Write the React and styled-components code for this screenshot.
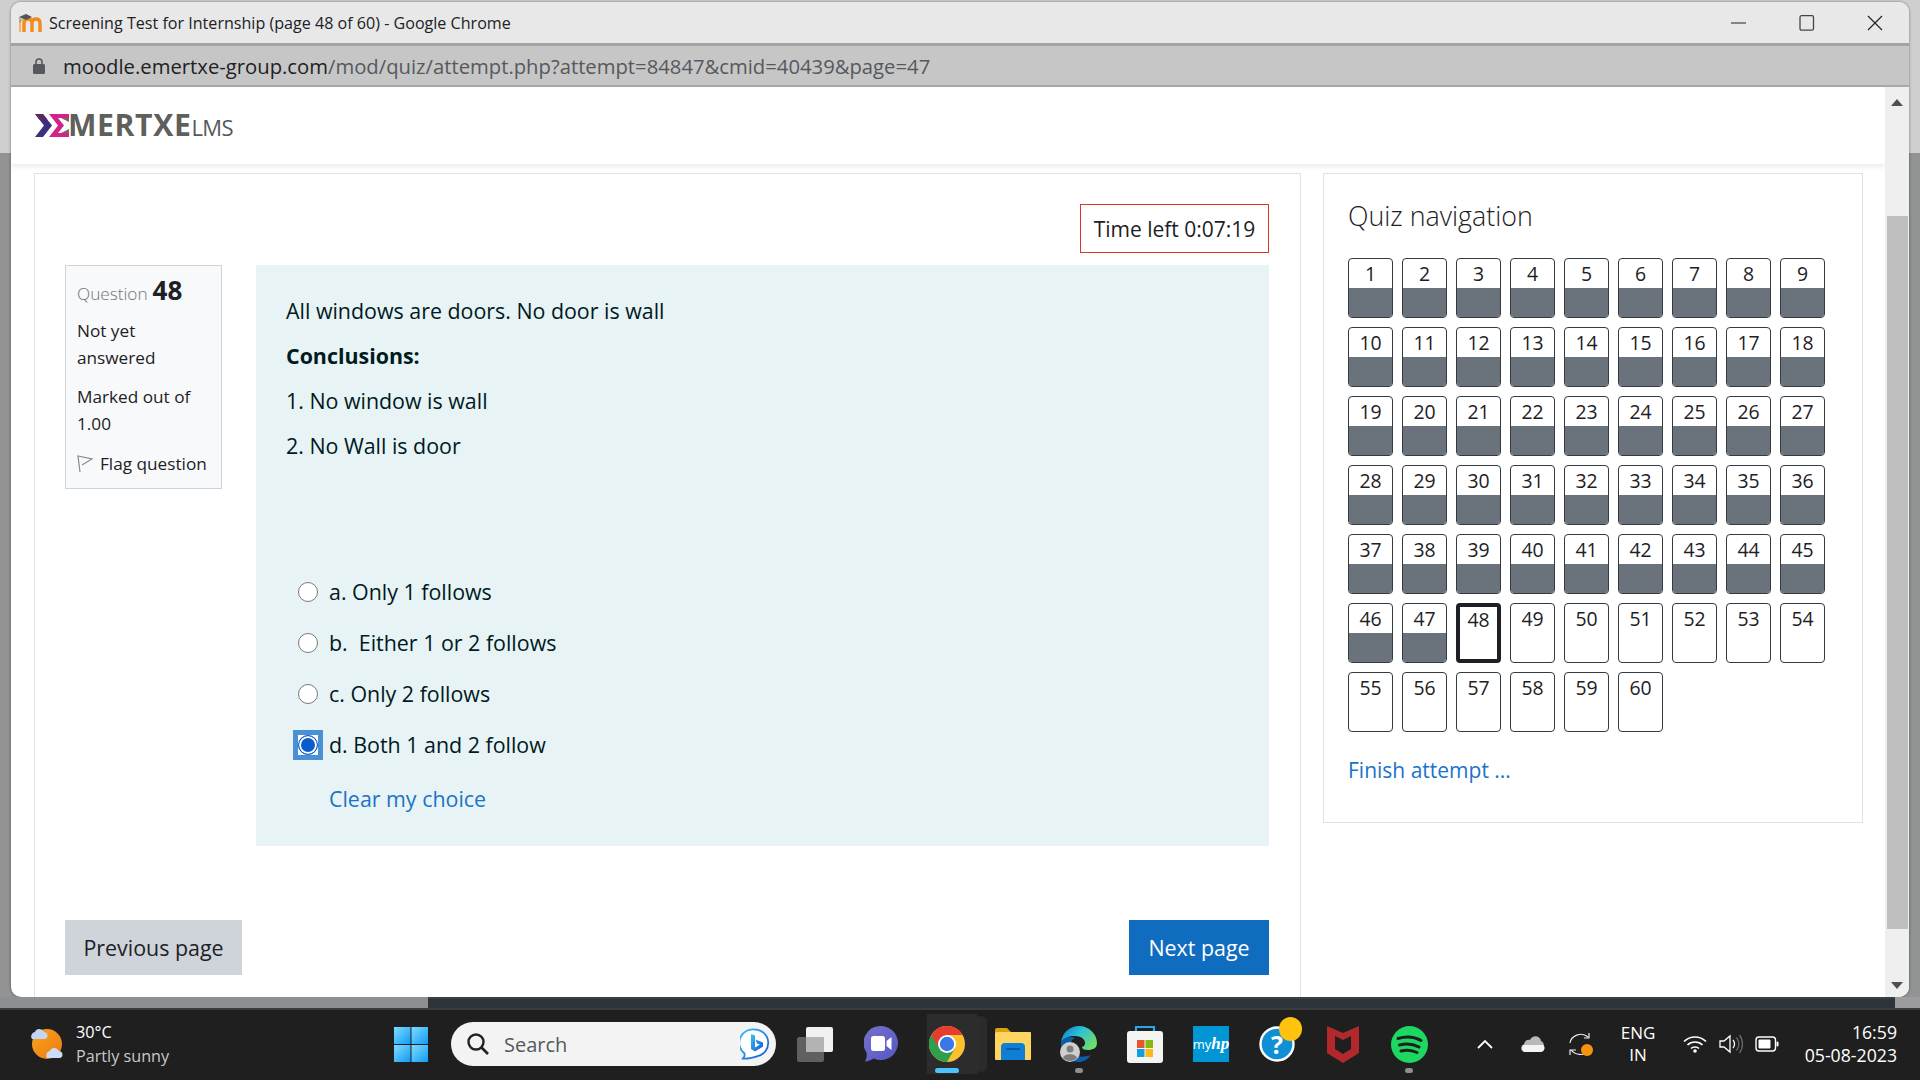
import React from 'react';
import styled, { createGlobalStyle } from 'styled-components';

const Global = createGlobalStyle`
  html, body { margin: 0; padding: 0; background: #1f1f1f; }
  body { font-family: "Open Sans", "Noto Sans", sans-serif; color: #1d2125; }
  * { box-sizing: border-box; }
`;

const Screen = styled.div`
  width: 1920px;
  height: 1080px;
  display: flex;
  flex-direction: column;
  overflow: hidden;
  background: #1f1f1f;
`;

const Desktop = styled.div`
  height: 997px;
  padding: 2px 11px 0 11px;
  flex: none;
  background: linear-gradient(#cfcfcf 0 153px, #929394 153px);
`;

const Win = styled.div`
  height: 995px;
  border-radius: 10px;
  overflow: hidden;
  display: flex;
  flex-direction: column;
  background: #fff;
  box-shadow: 0 0 3px rgba(0, 0, 0, 0.45);
`;

const TitleBar = styled.div`
  height: 44px;
  flex: none;
  display: flex;
  align-items: center;
  padding: 0 0 0 7px;
  background: #e8e8e8;
  border-bottom: 3px solid #a3a3a3;
`;

const TitleText = styled.span`
  margin-left: 7px;
  font-size: 16.1px;
  color: #202124;
  white-space: nowrap;
`;

const WinControls = styled.div`
  margin-left: auto;
  display: flex;
  height: 100%;
`;

const WinControl = styled.div`
  width: 68px;
  display: flex;
  align-items: center;
  justify-content: center;
`;

const AddressBar = styled.div`
  height: 41px;
  flex: none;
  display: flex;
  align-items: center;
  padding: 1px 0 0 21px;
  background: #c6c6c6;
  border-bottom: 2px solid #a9a9a9;
  font-size: 20.25px;
  white-space: nowrap;
`;

const Host = styled.span`
  margin-left: 17px;
  color: #202124;
`;

const UrlPath = styled.span`
  color: #55595e;
`;

const Page = styled.div`
  flex: 1;
  min-height: 0;
  display: flex;
`;

const PageBody = styled.div`
  flex: 1;
  min-width: 0;
  display: flex;
  flex-direction: column;
`;

const Header = styled.div`
  height: 77px;
  flex: none;
  display: flex;
  align-items: center;
  padding: 0 0 0 24px;
  box-shadow: 0 2px 6px rgba(0, 0, 0, 0.1);
`;

const LogoName = styled.span`
  margin-left: -1px;
  font-size: 30.2px;
  font-weight: 700;
  letter-spacing: 0.6px;
  color: #5f5f5c;
  line-height: 1;
`;

const LogoLms = styled.span`
  font-size: 22px;
  letter-spacing: -0.6px;
  color: #55595c;
  line-height: 1;
  margin-top: 3px;
`;

const Columns = styled.div`
  flex: 1;
  min-height: 0;
  display: flex;
  align-items: flex-start;
  padding: 9px 0 0 23px;
  gap: 22px;
`;

const MainCard = styled.div`
  width: 1267px;
  height: 830px;
  padding: 30px 31px 0 30px;
  border: 1px solid #dee2e6;
  border-bottom: 0;
  display: flex;
  flex-direction: column;
`;

const Timer = styled.div`
  align-self: flex-end;
  width: 189px;
  height: 49px;
  display: flex;
  align-items: center;
  justify-content: center;
  border: 1px solid #d9362b;
  font-size: 21px;
  white-space: nowrap;
`;

const QuestionRow = styled.div`
  display: flex;
  align-items: flex-start;
  margin-top: 12px;
  gap: 34px;
`;

const InfoBox = styled.div`
  width: 157px;
  height: 224px;
  flex: none;
  padding: 11px 0 0 11px;
  background: #f8f9fa;
  border: 1px solid #ced4da;
  font-size: 17.2px;
  line-height: 27px;
`;

const QNumber = styled.div`
  display: flex;
  align-items: baseline;
  height: 40px;
  color: #6c757d;
  font-weight: 300;
`;

const QBig = styled.span`
  margin-left: 5px;
  font-size: 26px;
  font-weight: 700;
  color: #1d2125;
`;

const InfoLine = styled.div`
  margin-top: ${props => props.$gap || 0}px;
`;

const FlagLine = styled.div`
  display: flex;
  align-items: center;
  margin-top: 13px;
  gap: 7px;
  white-space: nowrap;
`;

const Content = styled.div`
  flex: 1;
  height: 581px;
  padding: 29px 30px 0 30px;
  background: #e7f3f5;
  font-size: 21.4px;
  line-height: 33px;
`;

const Para = styled.p`
  margin: 0 0 12px;
  color: #001a1e;
  font-weight: ${props => (props.$bold ? 700 : 400)};
`;

const Options = styled.div`
  margin-top: 104px;
`;

const Option = styled.div`
  height: 51px;
  display: flex;
  align-items: center;
  padding-left: 7px;
  gap: 6px;
  white-space: pre;
  color: #001a1e;
`;

const RadioWrap = styled.span`
  width: 30px;
  height: 30px;
  flex: none;
  display: flex;
  align-items: center;
  justify-content: center;
  background: ${props => (props.$on ? '#fff' : 'transparent')};
  border: ${props => (props.$on ? '5px solid #4a90d4' : '0')};
`;

const Radio = styled.span`
  width: 20px;
  height: 20px;
  flex: none;
  border-radius: 50%;
  background: ${props => (props.$on ? '#0b5ccc' : '#fff')};
  border: ${props => (props.$on ? '1.5px solid #0b5ccc' : '1.5px solid #7a7a7a')};
  box-shadow: ${props => (props.$on ? 'inset 0 0 0 2px #fff' : 'none')};
`;

const Link = styled.a`
  color: #1a73c9;
  text-decoration: none;
`;

const ClearLink = styled(Link)`
  display: block;
  margin: 12px 0 0 43px;
`;

const ButtonRow = styled.div`
  display: flex;
  justify-content: space-between;
  margin-top: 74px;
`;

const PageButton = styled.button`
  height: 55px;
  width: ${props => props.$w}px;
  border: 0;
  font: inherit;
  font-size: 21.4px;
  color: ${props => (props.$primary ? '#fff' : '#1d2125')};
  background: ${props => (props.$primary ? '#0f6cbf' : '#ced4da')};
`;

const NavCard = styled.div`
  width: 540px;
  height: 650px;
  flex: none;
  padding: 22px 24px 0;
  border: 1px solid #dee2e6;
`;

const NavTitle = styled.div`
  font-size: 26.8px;
  font-weight: 300;
  line-height: 40px;
  color: #1d2125;
`;

const NavGrid = styled.div`
  display: grid;
  grid-template-columns: repeat(9, 45px);
  grid-auto-rows: 60px;
  gap: 9px;
  margin-top: 22px;
`;

const NavButton = styled.div`
  display: flex;
  flex-direction: column;
  overflow: hidden;
  border-radius: 4px;
  background: #fff;
  border: ${props => (props.$current ? '4px solid #1d2125' : '1px solid #343a40')};
`;

const NavNumber = styled.div`
  height: ${props => (props.$current ? 26 : 29)}px;
  flex: none;
  text-align: center;
  font-size: 19.4px;
  line-height: ${props => (props.$current ? 25 : 29)}px;
`;

const NavFill = styled.div`
  flex: 1;
  background: ${props => (props.$answered ? '#6a737b' : 'transparent')};
`;

const FinishLink = styled(Link)`
  display: block;
  margin-top: 22px;
  font-size: 21px;
  line-height: 33px;
`;

const Scrollbar = styled.div`
  width: 24px;
  flex: none;
  display: flex;
  flex-direction: column;
  align-items: center;
  background: #efefef;
`;

const ArrowSlot = styled.div`
  height: ${props => props.$h}px;
  flex: none;
  display: flex;
  align-items: center;
  justify-content: center;
`;

const ScrollTrack = styled.div`
  flex: 1;
  width: 100%;
  padding: 99px 1px 0 2px;
`;

const ScrollThumb = styled.div`
  height: 713px;
  background: #bfbfbf;
`;

const Strip = styled.div`
  height: 11px;
  flex: none;
  display: flex;
  background: #2d3339;
  border-top: 2px solid #3a3f44;
`;

const StripEnd = styled.div`
  width: ${props => props.$w}px;
  margin-top: -2px;
  background: ${props => props.$bg};
`;

const StripFill = styled.div`
  flex: 1;
`;

const Taskbar = styled.div`
  height: 72px;
  flex: none;
  display: flex;
  align-items: center;
  padding-bottom: 2px;
  background: #1f1f1f;
  border-top: 2px solid #3c3c3c;
  color: #fff;
`;

const Weather = styled.div`
  width: 394px;
  flex: none;
  display: flex;
  align-items: center;
  padding-left: 28px;
  gap: 10px;
`;

const WeatherText = styled.div`
  font-size: 16.2px;
  line-height: 24px;
`;

const WeatherSub = styled.div`
  color: #c9c9c9;
`;

const Search = styled.div`
  width: 325px;
  height: 44px;
  flex: none;
  margin: 0 6px 0 23px;
  display: flex;
  align-items: center;
  padding: 0 6px 0 15px;
  border-radius: 22px;
  background: #f3f3f3;
`;

const SearchLabel = styled.span`
  margin-left: 14px;
  font-size: 20px;
  color: #55595c;
`;

const SearchEnd = styled.span`
  margin-left: auto;
  display: flex;
`;

const TaskItem = styled.div`
  position: relative;
  width: 66px;
  height: 60px;
  flex: none;
  display: flex;
  align-items: center;
  justify-content: center;
  border-radius: 6px;
  ${props => props.$active && `
    background: linear-gradient(#2c2c2c, #2c2c2c) 13px 0 / 53px 100% no-repeat;
    &::after {
      content: '';
      position: absolute;
      left: 66px;
      top: 2px;
      bottom: 2px;
      width: 7px;
      border-radius: 0 6px 6px 0;
      background: #2b2b2b;
    }
  `}
`;

const Pip = styled.span`
  position: absolute;
  left: ${props => (props.$wide ? 21 : 29)}px;
  bottom: 1px;
  width: ${props => (props.$wide ? 24 : 8)}px;
  height: 5px;
  border-radius: 3px;
  background: ${props => (props.$wide ? '#4cc2ff' : '#8f8f8f')};
`;

const HelpBadge = styled.span`
  position: absolute;
  left: 35px;
  top: 3px;
  width: 23px;
  height: 24px;
  border-radius: 50%;
  background: #ffc20e;
`;

const HelpMark = styled.span`
  position: absolute;
  inset: 0;
  display: flex;
  align-items: center;
  justify-content: center;
  font-size: 25px;
  font-weight: 700;
  color: #fff;
`;

const HpBox = styled.div`
  width: 36px;
  height: 36px;
  display: flex;
  align-items: center;
  justify-content: center;
  background: #0096d6;
  font-size: 13px;
  color: #fff;
`;

const HpBold = styled.span`
  font-style: italic;
  font-weight: 700;
  font-family: "Liberation Serif", serif;
  font-size: 17px;
`;

const Tray = styled.div`
  flex: 1;
  display: flex;
  align-items: center;
  margin-left: 23px;
  padding-right: 23px;
`;

const TrayItem = styled.div`
  width: ${props => props.$w}px;
  margin-left: ${props => props.$ml || 0}px;
  flex: none;
  display: flex;
  justify-content: center;
`;

const Lang = styled.div`
  font-size: 17px;
  line-height: 22px;
  text-align: center;
`;

const Clock = styled.div`
  margin-left: auto;
  font-size: 17.7px;
  line-height: 23px;
  text-align: right;
  white-space: nowrap;
`;

const MoodleIcon = () => (
  <svg width="24" height="20" viewBox="0 0 24 20">
    <path d="M6 19V10c0-3 2-4 4-4s4 1 4 4v9M14 10c0-3 2-4 4-4s4 1 4 4v9" fill="none" stroke="#f28a1e" strokeWidth="3.4" />
    <path d="M2 19v-9c0-2 2-4 5-4" fill="none" stroke="#f6b26b" strokeWidth="2" />
    <path d="M1 4l7-3 6 3-6 3z" fill="#555" />
    <path d="M2 4.500v5" stroke="#777" strokeWidth="1" />
  </svg>
);

const LockIcon = () => (
  <svg width="14" height="16" viewBox="0 0 14 16">
    <rect x="1" y="6" width="12" height="10" rx="1.500" fill="#55585c" />
    <path d="M4 6.500V4a3 3 0 0 1 6 0v2.500" fill="none" stroke="#55585c" strokeWidth="1.600" />
  </svg>
);

const MinIcon = () => (
  <svg width="16" height="16" viewBox="0 0 16 16"><path d="M0 8h15" stroke="#222" strokeWidth="1.200" /></svg>
);

const MaxIcon = () => (
  <svg width="16" height="16" viewBox="0 0 16 16"><rect x="1" y="0.700" width="13.500" height="14.500" rx="1.500" fill="none" stroke="#444" strokeWidth="1.300" /></svg>
);

const CloseIcon = () => (
  <svg width="16" height="16" viewBox="0 0 16 16"><path d="M1 1l14 14M15 1L1 15" stroke="#222" strokeWidth="1.200" /></svg>
);

const LogoMark = () => (
  <svg width="34" height="23" viewBox="0 0 34 23">
    <path d="M0 0h8l9 11.500L8 23H0l9-11.500z" fill="#3b2f7f" />
    <path d="M0 0h8l4.500 5.700H4.500z" fill="#5b2a5f" />
    <path d="M14 0h20v4H23l6 7.500L23 19h11v4H14l9-11.500z" fill="#d5218a" />
    <path d="M26 4h8v4zM26 19h8v-4z" fill="#6b6b68" />
  </svg>
);

const FlagIcon = () => (
  <svg width="16" height="18" viewBox="0 0 16 18">
    <path d="M3 17L1 1l14 3-10 6" fill="none" stroke="#8a8a8a" strokeWidth="1.200" />
  </svg>
);

const ArrowUp = () => (
  <svg width="12" height="7" viewBox="0 0 12 7"><path d="M6 0l6 7H0z" fill="#505050" /></svg>
);

const ArrowDown = () => (
  <svg width="12" height="7" viewBox="0 0 12 7"><path d="M0 0h12L6 7z" fill="#505050" /></svg>
);

const WeatherIcon = () => (
  <svg width="38" height="36" viewBox="0 0 38 36">
    <defs>
      <linearGradient id="sun" x1="0" y1="0" x2="1" y2="1">
        <stop offset="0" stopColor="#f9a51a" />
        <stop offset="1" stopColor="#ec7a12" />
      </linearGradient>
    </defs>
    <ellipse cx="19" cy="18" rx="15" ry="15" fill="url(#sun)" />
    <path d="M4 13a4.500 4.500 0 0 1 3-7c1-4 7-4 9 0 4 0 5 6 1 7z" fill="#c3d5f7" />
    <path d="M19 32a4.500 4.500 0 0 1 3-7c1-4 7-4 9 0 4 0 5 6 1 7z" fill="#ccdcf8" />
  </svg>
);

const WinLogo = () => (
  <svg width="34" height="35" viewBox="0 0 34 35" style={{ flex: 'none' }}>
    <defs>
      <linearGradient id="tile" x1="0" y1="0" x2="1" y2="1">
        <stop offset="0" stopColor="#7fdcff" />
        <stop offset="1" stopColor="#0f9bf5" />
      </linearGradient>
    </defs>
    <rect x="0" y="0" width="16.500" height="17" fill="url(#tile)" />
    <rect x="17.500" y="0" width="16.500" height="17" fill="url(#tile)" />
    <rect x="0" y="18" width="16.500" height="17" fill="url(#tile)" />
    <rect x="17.500" y="18" width="16.500" height="17" fill="url(#tile)" />
  </svg>
);

const MagnifierIcon = () => (
  <svg width="24" height="24" viewBox="0 0 24 24">
    <circle cx="10" cy="10" r="7.500" fill="none" stroke="#222" strokeWidth="2.400" />
    <path d="M15.500 15.500L22 22" stroke="#222" strokeWidth="2.600" />
  </svg>
);

const BingIcon = () => (
  <svg width="30" height="32" viewBox="0 0 30 32">
    <defs>
      <linearGradient id="bing" x1="0" y1="0" x2="1" y2="1">
        <stop offset="0" stopColor="#36c3f0" />
        <stop offset="1" stopColor="#1656d8" />
      </linearGradient>
    </defs>
    <path d="M15 1.500a13.500 13.500 0 0 1 2 26.800C13 29.500 8 31 3 30.500c1.500-1.500 2-3 1.500-5A13.500 13.500 0 0 1 15 1.500z" fill="#fff" stroke="url(#bing)" strokeWidth="1.800" />
    <path d="M11 6l4 1.500v12l5-3-3-1-1.500-4 7.500 3v4l-8 5-4-2.500z" fill="url(#bing)" />
  </svg>
);

const TaskViewIcon = () => (
  <svg width="36" height="35" viewBox="0 0 36 35">
    <rect x="0" y="10" width="27" height="25" rx="2" fill="#606060" />
    <rect x="9" y="0" width="27" height="25" rx="2" fill="#f1f1f1" />
    <rect x="9" y="10" width="18" height="15" fill="#b3b3b3" />
  </svg>
);

const TeamsIcon = () => (
  <svg width="34" height="36" viewBox="0 0 34 36">
    <defs>
      <linearGradient id="teams" x1="0" y1="0" x2="1" y2="1">
        <stop offset="0" stopColor="#7b6fc9" />
        <stop offset="1" stopColor="#5159c6" />
      </linearGradient>
    </defs>
    <path d="M17 0a17 17 0 1 1-7 32.500C7 34 4 35.500 1 35.500c1.500-3 2-6 1.500-9A17 17 0 0 1 17 0z" fill="url(#teams)" />
    <rect x="7" y="10" width="14" height="15" rx="2.500" fill="#fff" />
    <path d="M22.500 15l5-4v13l-5-4z" fill="#fff" />
  </svg>
);

const ChromeIcon = () => (
  <svg width="36" height="36" viewBox="0 0 40 40">
    <circle cx="20" cy="20" r="20" fill="#fbc02d" />
    <path d="M2.680 10A20 20 0 0 0 20 40l8.660-15L20 20z" fill="#2e9e4f" />
    <path d="M20 0a20 20 0 0 1 17.320 10H20l-8.660 15-8.660-15A20 20 0 0 1 20 0z" fill="#e53d30" />
    <circle cx="20" cy="20" r="10" fill="#fff" />
    <circle cx="20" cy="20" r="8" fill="#3a78e7" />
  </svg>
);

const FolderIcon = () => (
  <svg width="36" height="34" viewBox="0 0 36 34">
    <path d="M0 3a2 2 0 0 1 2-2h10l4 4H0z" fill="#d9a20b" />
    <rect x="0" y="5" width="36" height="28" rx="1" fill="#ffd561" />
    <path d="M6 33V20a4 4 0 0 1 4-4h16a4 4 0 0 1 4 4v13z" fill="#0f7fd6" />
    <rect x="11" y="21" width="14" height="2" fill="#0b5aa8" />
  </svg>
);

const EdgeIcon = () => (
  <svg width="38" height="38" viewBox="0 0 38 38">
    <defs>
      <linearGradient id="edgeTop" x1="0" y1="0" x2="1" y2="0.600">
        <stop offset="0" stopColor="#0c78c8" />
        <stop offset="0.500" stopColor="#2dc1d6" />
        <stop offset="1" stopColor="#6fdc6b" />
      </linearGradient>
    </defs>
    <path d="M1 17C3 6 11 1 19 1c10 0 18 8 18 17 0 5-4 7-9 7-4 0-6-1-6-3 3-1 4-4 2-7-3-5-17-6-23 2z" fill="url(#edgeTop)" />
    <path d="M1 17c3-5 10-6 14-4-5 2-6 9-3 14 3 5 10 6 19 3-4 5-8 7-12 7C8 37 0 28 1 17z" fill="#0d5ea8" />
    <circle cx="10" cy="27" r="10" fill="#cfcfcf" />
    <circle cx="10" cy="24" r="3.500" fill="#7d7d7d" />
    <path d="M3 33c1-5 13-5 14 0-3 4-11 4-14 0z" fill="#7d7d7d" />
  </svg>
);

const StoreIcon = () => (
  <svg width="36" height="38" viewBox="0 0 36 38">
    <path d="M9 7V2h18v5" fill="none" stroke="#25a7e8" strokeWidth="2.200" />
    <rect x="0" y="6" width="36" height="32" rx="3" fill="#f4f4f4" />
    <rect x="10" y="15" width="7.500" height="8" fill="#e8542e" />
    <rect x="18.500" y="15" width="7.500" height="8" fill="#84b817" />
    <rect x="10" y="24" width="7.500" height="8" fill="#129fe0" />
    <rect x="18.500" y="24" width="7.500" height="8" fill="#fdb813" />
  </svg>
);

const HelpIcon = () => (
  <svg width="36" height="36" viewBox="0 0 36 36">
    <circle cx="18" cy="18" r="16.500" fill="#0e8fd6" stroke="#fff" strokeWidth="2.400" />
  </svg>
);

const McAfeeIcon = () => (
  <svg width="32" height="37" viewBox="0 0 32 37">
    <path d="M0 0l16 7 16-7v27l-16 10L0 27z" fill="#b3282d" />
    <path d="M8 10l8 4 8-4v13l-8 5-8-5z" fill="#1f1f1f" />
  </svg>
);

const SpotifyIcon = () => (
  <svg width="37" height="37" viewBox="0 0 37 37">
    <circle cx="18.500" cy="18.500" r="18.500" fill="#1ed760" />
    <path d="M7 12.500c8-2.500 16-2 23 2M8.500 19c7-2 13-1.500 19.500 2M10 25c5.500-1.500 11-1 16 1.500" fill="none" stroke="#1f1f1f" strokeWidth="3" strokeLinecap="round" />
  </svg>
);

const ChevronIcon = () => (
  <svg width="16" height="10" viewBox="0 0 16 10"><path d="M1 9l7-7 7 7" fill="none" stroke="#fff" strokeWidth="1.800" /></svg>
);

const CloudIcon = () => (
  <svg width="24" height="18" viewBox="0 0 24 18">
    <path d="M4 17a4 4 0 0 1-1-7.800C4 5 7 4 9 5c2-5 10-5 11 1 4 1 5 11-1 11z" fill="#b9b9b9" />
    <path d="M2 10h20c3 3 1 7-3 7H4c-3 0-4-4-2-7z" fill="#f4f4f4" />
  </svg>
);

const SyncIcon = () => (
  <svg width="26" height="26" viewBox="0 0 26 26">
    <path d="M2 12C3 5 13 0 20 6M21 2v5h-5" fill="none" stroke="#eee" strokeWidth="1.200" />
    <path d="M21 21C15 25 7 24 3 19M2 24v-5h6" fill="none" stroke="#eee" strokeWidth="1.200" />
    <circle cx="19" cy="19" r="6" fill="#f7920f" />
  </svg>
);

const WifiIcon = () => (
  <svg width="24" height="18" viewBox="0 0 24 18">
    <path d="M1 6.500c6-6 16-6 22 0M4.500 10c4-4 11-4 15 0M8 13.500c2-2 6-2 8 0" fill="none" stroke="#fff" strokeWidth="1.700" />
    <circle cx="12" cy="16" r="1.800" fill="#fff" />
  </svg>
);

const SpeakerIcon = () => (
  <svg width="24" height="20" viewBox="0 0 24 20">
    <path d="M1 7h4l6-5v16l-6-5H1z" fill="none" stroke="#fff" strokeWidth="1.300" />
    <path d="M14 6c2 2 2 6 0 8" fill="none" stroke="#fff" strokeWidth="1.300" />
    <path d="M17.500 3.500c3 4 3 9 0 13M20.500 1c4 5 4 13 0 18" fill="none" stroke="#6a6a6a" strokeWidth="1.300" />
  </svg>
);

const BatteryIcon = () => (
  <svg width="24" height="16" viewBox="0 0 24 16">
    <rect x="1" y="1" width="19.500" height="14" rx="3" fill="none" stroke="#fff" strokeWidth="1.400" />
    <rect x="3.500" y="3.500" width="12" height="9" rx="1" fill="#fff" />
    <rect x="21.500" y="5.500" width="2" height="5" rx="1" fill="#fff" />
  </svg>
);

const options = [
  { label: 'a. Only 1 follows' },
  { label: 'b.  Either 1 or 2 follows' },
  { label: 'c. Only 2 follows' },
  { label: 'd. Both 1 and 2 follow', checked: true }
];

const navItems = Array.from({ length: 60 }, (_, i) => i + 1);

const App = () => (
  <Screen>
    <Global />
    <Desktop>
      <Win>
        <TitleBar>
          <MoodleIcon />
          <TitleText>Screening Test for Internship (page 48 of 60) - Google Chrome</TitleText>
          <WinControls>
            <WinControl><MinIcon /></WinControl>
            <WinControl><MaxIcon /></WinControl>
            <WinControl><CloseIcon /></WinControl>
          </WinControls>
        </TitleBar>
        <AddressBar>
          <LockIcon />
          <Host>moodle.emertxe-group.com</Host>
          <UrlPath>/mod/quiz/attempt.php?attempt=84847&amp;cmid=40439&amp;page=47</UrlPath>
        </AddressBar>
        <Page>
          <PageBody>
            <Header>
              <LogoMark />
              <LogoName>MERTXE</LogoName>
              <LogoLms>LMS</LogoLms>
            </Header>
            <Columns>
              <MainCard>
                <Timer>Time left 0:07:19</Timer>
                <QuestionRow>
                  <InfoBox>
                    <QNumber>Question<QBig>48</QBig></QNumber>
                    <InfoLine>Not yet<br />answered</InfoLine>
                    <InfoLine $gap={12}>Marked out of<br />1.00</InfoLine>
                    <FlagLine><FlagIcon />Flag question</FlagLine>
                  </InfoBox>
                  <Content>
                    <Para>All windows are doors. No door is wall</Para>
                    <Para $bold>Conclusions:</Para>
                    <Para>1. No window is wall</Para>
                    <Para>2. No Wall is door</Para>
                    <Options>
                      {options.map(o => (
                        <Option key={o.label}>
                          <RadioWrap $on={o.checked}><Radio $on={o.checked} /></RadioWrap>
                          {o.label}
                        </Option>
                      ))}
                    </Options>
                    <ClearLink>Clear my choice</ClearLink>
                  </Content>
                </QuestionRow>
                <ButtonRow>
                  <PageButton $w={177}>Previous page</PageButton>
                  <PageButton $w={140} $primary>Next page</PageButton>
                </ButtonRow>
              </MainCard>
              <NavCard>
                <NavTitle>Quiz navigation</NavTitle>
                <NavGrid>
                  {navItems.map(n => (
                    <NavButton key={n} $current={n === 48}>
                      <NavNumber $current={n === 48}>{n}</NavNumber>
                      <NavFill $answered={n < 48} />
                    </NavButton>
                  ))}
                </NavGrid>
                <FinishLink>Finish attempt ...</FinishLink>
              </NavCard>
            </Columns>
          </PageBody>
          <Scrollbar>
            <ArrowSlot $h={30}><ArrowUp /></ArrowSlot>
            <ScrollTrack><ScrollThumb /></ScrollTrack>
            <ArrowSlot $h={24}><ArrowDown /></ArrowSlot>
          </Scrollbar>
        </Page>
      </Win>
    </Desktop>
    <Strip>
      <StripEnd $w={428} $bg="#8e8f90" />
      <StripFill />
      <StripEnd $w={25} $bg="#9c9c9e" />
    </Strip>
    <Taskbar>
      <Weather>
        <WeatherIcon />
        <WeatherText>30°C<WeatherSub>Partly sunny</WeatherSub></WeatherText>
      </Weather>
      <WinLogo />
      <Search>
        <MagnifierIcon />
        <SearchLabel>Search</SearchLabel>
        <SearchEnd><BingIcon /></SearchEnd>
      </Search>
      <TaskItem><TaskViewIcon /></TaskItem>
      <TaskItem><TeamsIcon /></TaskItem>
      <TaskItem $active><ChromeIcon /><Pip $wide /></TaskItem>
      <TaskItem><FolderIcon /></TaskItem>
      <TaskItem><EdgeIcon /><Pip /></TaskItem>
      <TaskItem><StoreIcon /></TaskItem>
      <TaskItem><HpBox>my<HpBold>hp</HpBold></HpBox></TaskItem>
      <TaskItem><HelpIcon /><HelpMark>?</HelpMark><HelpBadge /></TaskItem>
      <TaskItem><McAfeeIcon /></TaskItem>
      <TaskItem><SpotifyIcon /><Pip /></TaskItem>
      <Tray>
        <TrayItem $w={40}><ChevronIcon /></TrayItem>
        <TrayItem $w={56}><CloudIcon /></TrayItem>
        <TrayItem $w={40}><SyncIcon /></TrayItem>
        <TrayItem $w={54} $ml={10}><Lang>ENG<br />IN</Lang></TrayItem>
        <TrayItem $w={24} $ml={18}><WifiIcon /></TrayItem>
        <TrayItem $w={24} $ml={12}><SpeakerIcon /></TrayItem>
        <TrayItem $w={24} $ml={12}><BatteryIcon /></TrayItem>
        <Clock>16:59<br />05-08-2023</Clock>
      </Tray>
    </Taskbar>
  </Screen>
);

export default App;
